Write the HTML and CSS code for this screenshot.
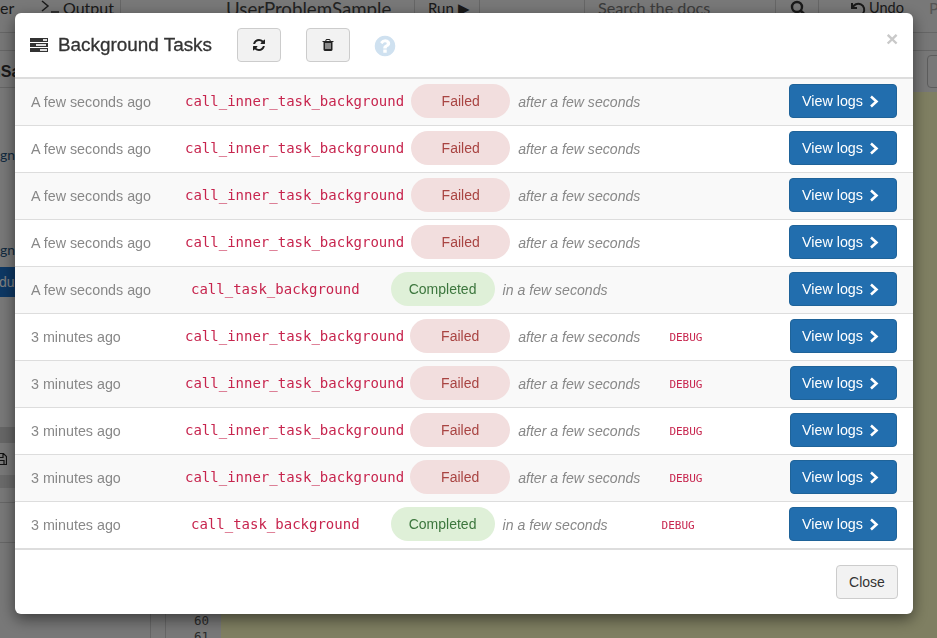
FILE: index.html
```html
<!DOCTYPE html>
<html lang="en">
<head>
<meta charset="utf-8">
<title>Background Tasks</title>
<link rel="stylesheet" href="styles.css">
</head>
<body>
<div class="page">
  <div class="topbar">
    <div class="tb tb-left">er</div>
    <div class="tb tb-output">
      <svg class="prompt" width="18" height="13" viewBox="0 0 18 13"><path d="M1 1 7 6 1 11M10 12h8" fill="none" stroke="#333" stroke-width="1.5"/></svg>
      Output
    </div>
    <div class="tb tb-title">UserProblemSample</div>
    <div class="tb tb-run">Run &#9654;</div>
    <div class="tb tb-gap"></div>
    <div class="tb tb-search">Search the docs</div>
    <div class="tb tb-mag">
      <svg width="16" height="16" viewBox="0 0 16 16"><circle cx="7" cy="7" r="5" fill="none" stroke="#333" stroke-width="2.4"/><path d="M10.5 10.5 15 15" stroke="#333" stroke-width="2.6"/></svg>
    </div>
    <div class="tb tb-undo">
      <svg width="17" height="17" viewBox="0 0 17 17"><path d="M3 3v5h5M3.5 8a6 6 0 1 1 1.5 6" fill="none" stroke="#333" stroke-width="2"/></svg>
      Undo
    </div>
    <div class="tb tb-more">P</div>
  </div>
  <div class="subbar"></div>
  <div class="workspace">
    <div class="sidebar">
      <div class="side-title"><span class="side-title-text">nSample</span></div>
      <div class="side-link side-link-a">gn_x</div>
      <div class="side-link side-link-b">gn_x</div>
      <div class="side-active"><span class="side-active-text">dule</span></div>
      <div class="side-spacer"></div>
      <div class="side-band"></div>
      <div class="side-tools">
        <svg width="12" height="14" viewBox="0 0 12 14"><path d="M.5 1.5h8l3 3v8h-11zM3 1.5v4h5v-4M3 12.5v-4h6v4" fill="none" stroke="#222" stroke-width="1.2"/></svg>
      </div>
      <div class="side-band side-band-b"></div>
      <div class="side-row"></div>
      <div class="side-row side-row-b"></div>
    </div>
    <div class="main">
      <div class="main-tools"><div class="tool-box"></div></div>
      <div class="editor">
        <div class="rail"></div>
        <div class="gutter"><span>60</span><span>61</span></div>
        <div class="code"></div>
      </div>
    </div>
  </div>
</div>
<div class="backdrop"></div>

<div class="modal">
  <div class="modal-header">
    <svg class="tasks-icon" width="18" height="14" viewBox="0 0 18 14">
      <rect width="18" height="4" fill="#333"/><rect x="13" y="1" width="4" height="2" fill="#ddd"/>
      <rect y="5" width="18" height="4" fill="#333"/><rect x="6" y="6" width="10" height="2" fill="#ddd"/>
      <rect y="10" width="18" height="4" fill="#333"/><rect x="10" y="11" width="7" height="2" fill="#ddd"/>
    </svg>
    <h4 class="modal-title">Background Tasks</h4>
    <button class="btn-icon btn-refresh" type="button">
      <svg width="14" height="14" viewBox="0 0 1792 1792"><path d="M1639 1056q0 5-1 7-64 268-268 434.5t-478 166.5q-146 0-282.5-55t-243.5-157l-129 129q-19 19-45 19t-45-19-19-45v-448q0-26 19-45t45-19h448q26 0 45 19t19 45-19 45l-137 137q71 66 161 102t187 36q134 0 250-65t186-179q11-17 53-117 8-23 30-23h192q13 0 22.5 9.5t9.5 22.5zm25-800v448q0 26-19 45t-45 19h-448q-26 0-45-19t-19-45 19-45l138-138q-148-137-349-137-134 0-250 65t-186 179q-11 17-53 117-8 23-30 23h-199q-13 0-22.5-9.5t-9.5-22.5v-7q65-268 270-434.5t480-166.5q146 0 284 55.5t245 156.5l130-129q19-19 45-19t45 19 19 45z" fill="#222"/></svg>
    </button>
    <button class="btn-icon btn-trash" type="button">
      <svg width="14" height="14" viewBox="0 0 1792 1792"><path d="M704 1376v-704q0-14-9-23t-23-9h-64q-14 0-23 9t-9 23v704q0 14 9 23t23 9h64q14 0 23-9t9-23zm256 0v-704q0-14-9-23t-23-9h-64q-14 0-23 9t-9 23v704q0 14 9 23t23 9h64q14 0 23-9t9-23zm256 0v-704q0-14-9-23t-23-9h-64q-14 0-23 9t-9 23v704q0 14 9 23t23 9h64q14 0 23-9t9-23zm-544-992h448l-48-117q-7-9-17-11h-317q-10 2-17 11zm928 32v64q0 14-9 23t-23 9h-96v948q0 83-47 143.5t-113 60.5h-832q-66 0-113-58.5t-47-141.5v-952h-96q-14 0-23-9t-9-23v-64q0-14 9-23t23-9h309l70-167q15-37 54-63t79-26h320q40 0 79 26t54 63l70 167h309q14 0 23 9t9 23z" fill="#222"/></svg>
    </button>
    <svg class="help-icon" width="24" height="24" viewBox="0 0 1792 1792"><path d="M1024 1376v-192q0-14-9-23t-23-9h-192q-14 0-23 9t-9 23v192q0 14 9 23t23 9h192q14 0 23-9t9-23zm256-672q0-88-55.5-163t-138.5-116-170-41q-243 0-371 213-15 24 8 42l132 100q7 6 19 6 16 0 25-12 53-68 86-92 34-24 86-24 48 0 85.5 26t37.5 59q0 38-20 61t-68 45q-63 28-115.5 86.5t-52.5 125.5v36q0 14 9 23t23 9h192q14 0 23-9t9-23q0-19 21.5-49.5t54.5-49.5q32-18 49-28.5t46-35 44.5-48 28-60.5 12.5-81zm384 192q0 209-103 385.5t-279.5 279.5-385.5 103-385.5-103-279.5-279.5-103-385.5 103-385.5 279.5-279.5 385.5-103 385.5 103 279.5 279.5 103 385.5z" fill="#cfe1f0"/></svg>
    <button class="close-x" type="button">&times;</button>
  </div>

  <div class="task-list">
    <div class="task task-failed">
      <span class="task-time">A few seconds ago</span><code class="task-name">call_inner_task_background</code><span class="pill pill-failed">Failed</span><em class="task-note">after a few seconds</em>
      <button class="btn-logs" type="button">View logs <svg class="chev" width="10" height="13" viewBox="0 0 10 13"><path d="M2 1.5 7.5 6.5 2 11.5"/></svg></button>
    </div>
    <div class="task task-failed">
      <span class="task-time">A few seconds ago</span><code class="task-name">call_inner_task_background</code><span class="pill pill-failed">Failed</span><em class="task-note">after a few seconds</em>
      <button class="btn-logs" type="button">View logs <svg class="chev" width="10" height="13" viewBox="0 0 10 13"><path d="M2 1.5 7.5 6.5 2 11.5"/></svg></button>
    </div>
    <div class="task task-failed">
      <span class="task-time">A few seconds ago</span><code class="task-name">call_inner_task_background</code><span class="pill pill-failed">Failed</span><em class="task-note">after a few seconds</em>
      <button class="btn-logs" type="button">View logs <svg class="chev" width="10" height="13" viewBox="0 0 10 13"><path d="M2 1.5 7.5 6.5 2 11.5"/></svg></button>
    </div>
    <div class="task task-failed">
      <span class="task-time">A few seconds ago</span><code class="task-name">call_inner_task_background</code><span class="pill pill-failed">Failed</span><em class="task-note">after a few seconds</em>
      <button class="btn-logs" type="button">View logs <svg class="chev" width="10" height="13" viewBox="0 0 10 13"><path d="M2 1.5 7.5 6.5 2 11.5"/></svg></button>
    </div>
    <div class="task task-completed">
      <span class="task-time">A few seconds ago</span><code class="task-name">call_task_background</code><span class="pill pill-completed">Completed</span><em class="task-note">in a few seconds</em>
      <button class="btn-logs" type="button">View logs <svg class="chev" width="10" height="13" viewBox="0 0 10 13"><path d="M2 1.5 7.5 6.5 2 11.5"/></svg></button>
    </div>
    <div class="task task-failed task-debug">
      <span class="task-time">3 minutes ago</span><code class="task-name">call_inner_task_background</code><span class="pill pill-failed">Failed</span><em class="task-note">after a few seconds</em><code class="task-flag">DEBUG</code>
      <button class="btn-logs" type="button">View logs <svg class="chev" width="10" height="13" viewBox="0 0 10 13"><path d="M2 1.5 7.5 6.5 2 11.5"/></svg></button>
    </div>
    <div class="task task-failed task-debug">
      <span class="task-time">3 minutes ago</span><code class="task-name">call_inner_task_background</code><span class="pill pill-failed">Failed</span><em class="task-note">after a few seconds</em><code class="task-flag">DEBUG</code>
      <button class="btn-logs" type="button">View logs <svg class="chev" width="10" height="13" viewBox="0 0 10 13"><path d="M2 1.5 7.5 6.5 2 11.5"/></svg></button>
    </div>
    <div class="task task-failed task-debug">
      <span class="task-time">3 minutes ago</span><code class="task-name">call_inner_task_background</code><span class="pill pill-failed">Failed</span><em class="task-note">after a few seconds</em><code class="task-flag">DEBUG</code>
      <button class="btn-logs" type="button">View logs <svg class="chev" width="10" height="13" viewBox="0 0 10 13"><path d="M2 1.5 7.5 6.5 2 11.5"/></svg></button>
    </div>
    <div class="task task-failed task-debug">
      <span class="task-time">3 minutes ago</span><code class="task-name">call_inner_task_background</code><span class="pill pill-failed">Failed</span><em class="task-note">after a few seconds</em><code class="task-flag">DEBUG</code>
      <button class="btn-logs" type="button">View logs <svg class="chev" width="10" height="13" viewBox="0 0 10 13"><path d="M2 1.5 7.5 6.5 2 11.5"/></svg></button>
    </div>
    <div class="task task-completed task-debug">
      <span class="task-time">3 minutes ago</span><code class="task-name">call_task_background</code><span class="pill pill-completed">Completed</span><em class="task-note">in a few seconds</em><code class="task-flag">DEBUG</code>
      <button class="btn-logs" type="button">View logs <svg class="chev" width="10" height="13" viewBox="0 0 10 13"><path d="M2 1.5 7.5 6.5 2 11.5"/></svg></button>
    </div>
  </div>

  <div class="modal-footer">
    <button class="btn-close" type="button">Close</button>
  </div>
</div>
</body>
</html>
```
FILE: styles.css
```css
* { box-sizing: border-box; }

html, body {
  margin: 0;
  height: 100%;
  overflow: hidden;
  font-family: "Liberation Sans", Arial, sans-serif;
  font-size: 14px;
  color: #333;
}

/* Page behind the dialog */
.page {
  display: flex;
  flex-direction: column;
  height: 638px;
  overflow: hidden;
  background: #f0f0f0;
}

.topbar {
  display: flex;
  flex: none;
  height: 33px;
  border-bottom: 1px solid #ccc;
  overflow: hidden;
}

.tb {
  display: flex;
  flex: none;
  align-items: flex-start;
  line-height: 16px;
  font-family: "Lato", sans-serif;
  font-size: 16px;
  color: #333;
}

.tb-left { width: 40px; }
.tb-output { width: 81px; gap: 4px; padding-left: 1px; border-right: 1px solid #ccc; }
.prompt { flex: none; }
.tb-title { width: 294px; padding-left: 105px; font-size: 18.7px; line-height: 18px; border-right: 1px solid #ccc; color: #444; }
.tb-run { width: 65px; padding-left: 13px; font-size: 15px; border-right: 1px solid #ccc; white-space: nowrap; }
.tb-gap { width: 105px; border-right: 1px solid #ccc; }
.tb-search { width: 191px; padding-left: 13px; font-size: 16.2px; color: #777; border-right: 1px solid #ccc; }
.tb-mag { width: 43px; padding-left: 14px; border-right: 1px solid #ccc; }
.tb-undo { width: 110px; padding-left: 30px; gap: 3px; font-size: 14.5px; }
.tb-more { width: 10px; color: #aaa; }

.subbar {
  flex: none;
  height: 18px;
  border-bottom: 1px solid #ccc;
  background: #eee;
}

.workspace {
  display: flex;
  flex: 1;
  min-height: 0;
}

.sidebar {
  display: flex;
  flex: none;
  flex-direction: column;
  width: 151px;
  border-right: 1px solid #ccc;
  background: #f0f0f0;
}

.side-title {
  height: 37px;
  border-bottom: 1px solid #ccc;
  overflow: hidden;
  line-height: 42px;
  font-weight: bold;
  font-size: 16px;
}

.side-title-text { margin-left: -9px; }

.side-link {
  height: 16px;
  line-height: 16px;
  color: #23527c;
  font-family: "Lato", sans-serif;
}

.side-link-a { margin-top: 59px; }
.side-link-b { margin-top: 79px; }

.side-active {
  height: 30px;
  margin-top: 9px;
  line-height: 30px;
  background: #1c70c8;
  color: #fff;
  overflow: hidden;
}

.side-active-text { margin-left: -1px; }
.side-spacer { height: 130px; }
.side-band { height: 16px; background: #ccc; }

.side-tools {
  display: flex;
  align-items: center;
  height: 32px;
  margin-left: -5px;
}

.side-band-b { height: 13px; background: #d4d4d4; }
.side-row { height: 15px; border-bottom: 1px solid #ccc; }
.side-row-b { height: 40px; }

.main {
  display: flex;
  flex: 1;
  flex-direction: column;
  min-width: 0;
}

.main-tools {
  display: flex;
  flex: none;
  align-items: flex-start;
  justify-content: flex-end;
  height: 41px;
  padding-top: 4px;
}

.tool-box {
  width: 30px;
  height: 33px;
  margin-right: -20px;
  border: 1px solid #bbb;
  border-radius: 4px;
}

.editor {
  display: flex;
  flex: 1;
  min-height: 0;
}

.rail {
  flex: none;
  width: 15px;
  border-right: 1px solid #ccc;
}

.gutter {
  display: flex;
  flex: none;
  flex-direction: column;
  align-items: flex-end;
  justify-content: flex-end;
  width: 55px;
  margin-bottom: -7px;
  padding-right: 12px;
  font-family: "DejaVu Sans Mono", monospace;
  font-size: 12.5px;
  line-height: 16px;
  color: #555;
}

.code {
  flex: 1;
  background: #ffffc4;
}

.backdrop {
  position: fixed;
  inset: 0;
  background: rgba(0, 0, 0, 0.5);
}

/* Dialog */
.modal {
  position: fixed;
  left: 15px;
  top: 13px;
  display: flex;
  flex-direction: column;
  width: 898px;
  height: 601px;
  background: #fff;
  border-radius: 6px;
  box-shadow: 0 5px 15px rgba(0, 0, 0, 0.5);
  overflow: hidden;
}

.modal-header {
  display: flex;
  flex: none;
  align-items: center;
  height: 64px;
  padding: 0 15px;
}

.tasks-icon { flex: none; }

.modal-title {
  width: 179px;
  margin: 0 0 0 10px;
  font-size: 18.9px;
  font-weight: normal;
  -webkit-text-stroke: 0.3px #333;
  color: #333;
  white-space: nowrap;
}

.btn-icon {
  display: flex;
  flex: none;
  align-items: center;
  justify-content: center;
  width: 44px;
  height: 34px;
  padding: 0;
  background: #f2f2f2;
  border: 1px solid #ccc;
  border-radius: 4px;
}

.btn-trash { margin-left: 25px; }

.help-icon {
  flex: none;
  margin-left: 23px;
  margin-top: 2px;
}

.close-x {
  margin: -14px 0 0 auto;
  padding: 0;
  width: 12px;
  background: none;
  border: 0;
  font-family: "Liberation Sans", Arial, sans-serif;
  font-size: 21px;
  font-weight: bold;
  line-height: 1;
  color: #c9c9c9;
}

.task-list {
  flex: none;
  border-top: 2px solid #ddd;
  border-bottom: 2px solid #ddd;
}

.task {
  display: flex;
  align-items: center;
  height: 47px;
  padding: 0 16px;
  border-bottom: 1px solid #ddd;
}

.task:nth-child(odd) { background: #f9f9f9; }
.task:last-child { height: 46px; border-bottom: 0; }

.task-time {
  flex: none;
  width: 154px;
  font-size: 14.3px;
  color: #888;
}

.task-name {
  flex: none;
  margin-top: -2px;
  font-family: "DejaVu Sans Mono", monospace;
  font-size: 14px;
  color: #c7254e;
}

.task-completed .task-name { margin-left: 6px; }

.pill {
  flex: none;
  height: 34px;
  margin-bottom: 2px;
  border-radius: 17px;
  line-height: 34px;
  text-align: center;
}

.pill-failed {
  width: 99px;
  margin-left: 7px;
  background: #f2dede;
  color: #a94442;
}

.task-debug .pill-failed { width: 100px; margin-left: 6px; }

.pill-completed {
  width: 104px;
  margin-left: 31px;
  background: #dff0d8;
  color: #3c763d;
}

.task-note {
  flex: none;
  margin-left: 8px;
  font-size: 14.1px;
  color: #888;
}

.task-flag {
  flex: none;
  margin-left: 29px;
  font-family: "DejaVu Sans Mono", monospace;
  font-size: 11px;
  color: #c7254e;
}

.task-completed .task-flag { margin-left: 54px; }

.btn-logs {
  display: flex;
  flex: none;
  align-items: center;
  gap: 6px;
  width: 108px;
  height: 34px;
  margin-left: auto;
  margin-bottom: 2px;
  padding: 0 0 0 12px;
  background: #226eae;
  border: 1px solid #1f6399;
  border-radius: 4px;
  font-family: "Liberation Sans", Arial, sans-serif;
  font-size: 14.3px;
  color: #fff;
}

.task-failed.task-debug .btn-logs { width: 107px; padding-left: 11px; }

.chev {
  flex: none;
  fill: none;
  stroke: #fff;
  stroke-width: 2.6;
}

.modal-footer {
  display: flex;
  flex: 1;
  align-items: center;
  justify-content: flex-end;
  padding: 0 15px;
}

.btn-close {
  width: 62px;
  height: 34px;
  padding: 0;
  background: #f2f2f2;
  border: 1px solid #ccc;
  border-radius: 4px;
  font-family: "Liberation Sans", Arial, sans-serif;
  font-size: 14px;
  color: #333;
}
```
